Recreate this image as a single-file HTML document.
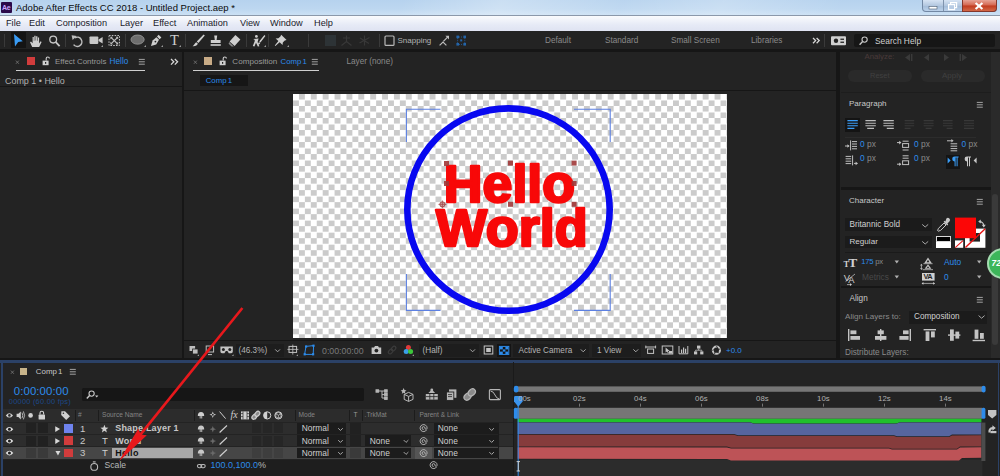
<!DOCTYPE html>
<html>
<head>
<meta charset="utf-8">
<title>Adobe After Effects CC 2018 - Untitled Project.aep *</title>
<style>
html,body{margin:0;padding:0;}
body{width:1000px;height:476px;overflow:hidden;background:#161616;font-family:"Liberation Sans",sans-serif;position:relative;}
#app{position:absolute;left:0;top:0;width:1000px;height:476px;overflow:hidden;background:#161616;}
.a{position:absolute;}
.t{position:absolute;white-space:nowrap;line-height:1;font-size:8.5px;color:#a0a0a0;}
.blue{color:#2d8ceb;}
.pn{position:absolute;background:#232323;}
/* title bar */
#title{left:0;top:0;width:1000px;height:15px;background:linear-gradient(115deg,rgba(255,255,255,0) 0,rgba(255,255,255,0) 40%,rgba(255,255,255,0.28) 50%,rgba(255,255,255,0.05) 62%,rgba(255,255,255,0.22) 72%,rgba(255,255,255,0) 84%),linear-gradient(#b6d2ee,#bdd7f0 60%,#cbe0f4);}
#menu{left:0;top:15px;width:1000px;height:16px;background:linear-gradient(#fafbfd,#e6eaf6 60%,#dfe3f2);border-top:1px solid #8b98aa;box-sizing:border-box;}
#tool{left:0;top:31px;width:1000px;height:18.3px;background:#232323;}
</style>
</head>
<body>
<div id="app">
<!-- TITLE BAR -->
<div id="title" class="a"></div>
<div class="a" style="left:1px;top:2px;width:11px;height:11px;background:#2a0a4a;border-radius:1px;"></div>
<span class="t" style="left:2px;top:4px;font-size:7px;color:#c9a6ff;font-weight:bold;letter-spacing:-0.3px;">Ae</span>
<span class="t" style="left:16px;top:3px;font-size:9.5px;color:#0a0a0a;">Adobe After Effects CC 2018 - Untitled Project.aep *</span>

<!-- window controls -->
<div class="a" style="left:922px;top:0;width:75px;height:12px;border:1px solid #7288a4;border-top:none;border-radius:0 0 4px 4px;box-sizing:border-box;background:linear-gradient(#d6e3f3,#b4c8e0 50%,#a3bbd8 52%,#bcd2ea);"></div>
<div class="a" style="left:943px;top:0;width:1px;height:11px;background:#7f93ad;"></div>
<div class="a" style="left:962px;top:0;width:35px;height:12px;border:1px solid #84382c;border-top:none;border-radius:0 0 4px 0;box-sizing:border-box;background:linear-gradient(#e6a396,#d4664f 48%,#c03a1e 52%,#d26848);"></div>
<svg class="a" style="left:922px;top:0;" width="75" height="12" viewBox="0 0 75 12"><rect x="7" y="6.4" width="8" height="2.6" fill="#fff" stroke="#4a5a70" stroke-width="0.6"/><rect x="28.6" y="2.6" width="6" height="5" fill="none" stroke="#fff" stroke-width="1.2"/><rect x="26.6" y="4.6" width="6" height="5" fill="#b8cce4" stroke="#fff" stroke-width="1.2"/><path d="M53.6 3 L60.4 9 M60.4 3 L53.6 9" stroke="#fff" stroke-width="2.2"/></svg>
<!-- MENU BAR -->
<div id="menu" class="a"></div>
<span class="t" style="left:6px;top:19px;font-size:9.2px;color:#1a1a2a;">File</span>
<span class="t" style="left:29px;top:19px;font-size:9.2px;color:#1a1a2a;">Edit</span>
<span class="t" style="left:56px;top:19px;font-size:9.2px;color:#1a1a2a;">Composition</span>
<span class="t" style="left:120px;top:19px;font-size:9.2px;color:#1a1a2a;">Layer</span>
<span class="t" style="left:153px;top:19px;font-size:9.2px;color:#1a1a2a;">Effect</span>
<span class="t" style="left:187px;top:19px;font-size:9.2px;color:#1a1a2a;">Animation</span>
<span class="t" style="left:240px;top:19px;font-size:9.2px;color:#1a1a2a;">View</span>
<span class="t" style="left:270px;top:19px;font-size:9.2px;color:#1a1a2a;">Window</span>
<span class="t" style="left:314px;top:19px;font-size:9.2px;color:#1a1a2a;">Help</span>
<!-- TOOLBAR -->
<div id="tool" class="a"></div>

<div class="a" style="left:10.5px;top:32px;width:15.5px;height:16px;background:#141414;"></div>
<svg class="a" style="left:0;top:31px;" width="1000" height="19" viewBox="0 31 1000 19">
<g fill="none" stroke="none">
<!-- separators -->
<g stroke="#3a3a3a" stroke-width="1"><path d="M4.5 34V47M65.5 34V47M125.5 34V47M185.5 34V47M246.5 34V47M268.5 34V47M308.5 34V47M379.5 34V47M824.5 34V47"/></g>
<!-- selection arrow -->
<path d="M14 34 L22.8 41.2 L18.2 42 L15 46.4 Z" fill="#3a9cf5"/>
<!-- hand -->
<path d="M32.2 47 L30 42.3 L31 41.5 L32.6 43.2 V37 H33.8 V40.8 H34.3 V35.8 H35.6 V40.6 H36.1 V36.2 H37.4 V40.8 H37.9 V37.6 H39.1 V43.5 L40.6 41.2 L41.6 42 L39.2 47 Z" fill="#cfcfcf"/>
<!-- zoom -->
<circle cx="53.2" cy="39.6" r="3.4" stroke="#c8c8c8" stroke-width="1.3"/><path d="M55.8 42.2 L59.6 46.2" stroke="#c8c8c8" stroke-width="1.8"/>
<!-- rotate -->
<path d="M75 37.8 A4.6 4.6 0 1 1 73.6 44.6" stroke="#bdbdbd" stroke-width="1.5"/><path d="M71.6 35.2 L76.8 36 L72.6 40 Z" fill="#bdbdbd"/>
<!-- camera -->
<rect x="89.5" y="36.5" width="8.8" height="7.4" rx="0.8" fill="#c8c8c8"/><path d="M98.6 39.6 L102.6 37 V43.6 L98.6 41 Z" fill="#c8c8c8"/><path d="M103 47 h-2 l2 -2z" fill="#9a9a9a"/>
<!-- pan behind -->
<g stroke="#bdbdbd" stroke-width="1" stroke-dasharray="1.6 1.2"><rect x="109" y="35.5" width="10.5" height="10"/></g>
<path d="M111.2 37.6 L117.4 43.6 M117.4 37.6 L111.2 43.6" stroke="#bdbdbd" stroke-width="1.3"/>
<path d="M110.4 36.8 h2.6 l-2.6 2.6z M118.2 36.8 h-2.6 l2.6 2.6z M110.4 44.4 h2.6 l-2.6 -2.6z M118.2 44.4 h-2.6 l2.6 -2.6z" fill="#bdbdbd"/>
<!-- ellipse -->
<ellipse cx="137.6" cy="39.6" rx="6.6" ry="4.6" fill="#6e6e6e" stroke="#9a9a9a" stroke-width="0.8"/><path d="M146 47 h-2 l2 -2z" fill="#9a9a9a"/>
<!-- pen -->
<path d="M158.6 34.8 L161.4 37.6 L159.6 39.2 L157 36.6 Z" fill="#cfcfcf"/><path d="M156.4 37.2 L159 39.8 L156.2 44.4 L151 46 L152.6 40.6 Z" fill="#cfcfcf"/><circle cx="155.4" cy="41.6" r="0.9" fill="#232323"/><path d="M163 47 h-2 l2 -2z" fill="#9a9a9a"/>
<!-- T -->
<path d="M181 47 h-2 l2 -2z" fill="#9a9a9a"/>
<!-- brush -->
<path d="M203.6 34.6 L204.8 35.6 L198.4 43 L196.8 41.6 Z" fill="#cfcfcf"/><path d="M196.2 42.2 L197.8 43.6 C197.4 45.6 195.4 46.4 192.6 46.2 C194.4 45.2 194.4 43.2 196.2 42.2Z" fill="#cfcfcf"/>
<!-- stamp -->
<path d="M214.2 35.4 h3 l-0.6 4.6 h4 v3 h-9.8 v-3 h4 Z" fill="#cfcfcf"/><rect x="210.6" y="44.2" width="10.2" height="1.6" fill="#cfcfcf"/>
<!-- eraser -->
<path d="M235.4 35 L240.4 39.6 L234.6 46 L229.6 41.4 Z" fill="#cfcfcf"/><path d="M229.2 42 L233.8 46.4 L231.6 46.6 L228.6 43.8 Z" fill="#8a8a8a"/>
<!-- roto / puppet -->
<circle cx="256.4" cy="36.4" r="1.4" fill="#cfcfcf"/><path d="M253.2 39 L258.6 38.4 L257.6 42 L259.4 46.2 L257.8 46.4 L256 42.8 L254.4 46.4 L252.8 46 L254.8 41 L254.6 39.8 Z" fill="#cfcfcf"/>
<path d="M264.4 35 L265.4 36 L260.4 42.4 L259.2 41.4 Z M259 42 L260.2 43 C259.8 44.4 258.6 44.8 257.4 44.6 C258.4 44 258.2 42.8 259 42Z" fill="#cfcfcf"/><path d="M266 47 h-2 l2 -2z" fill="#9a9a9a"/>
<!-- pin -->
<path d="M281.2 34.8 L286.6 40 L284.8 40.6 L282.8 42.4 L282.6 45 L279.6 42.2 L275.4 46 L274.8 45.4 L278.4 41 L275.6 38.4 L278.4 38.2 L280.4 36.4 Z" fill="#cfcfcf"/><path d="M289 47 h-2 l2 -2z" fill="#9a9a9a"/>
<!-- dim icons -->
<g fill="#2d3336"><rect x="325" y="35" width="11" height="11"/></g>
<g stroke="#383838" stroke-width="1.2"><path d="M346.5 35.5 V42 M341.5 45.5 L346.5 41.5 L351.5 45.5 M343 38 h7"/><path d="M364.5 35.5 V45.5 M359.5 43 L369.5 37.5 M360 38 L369 43.5"/></g>
<!-- snapping checkbox -->
<rect x="385" y="36" width="9" height="9.4" rx="1" stroke="#b8b8b8" stroke-width="1.2"/>
<!-- snap icon 1 -->
<path d="M439.6 45.4 L443 42 L446.4 45.4" stroke="#bdbdbd" stroke-width="1.2"/><path d="M443.4 41.4 L447.6 37.2" stroke="#bdbdbd" stroke-width="1.2"/><path d="M449 35.8 v3.6 l-3.6 -3.6z" fill="#bdbdbd"/>
<!-- snap icon 2 blue -->
<g fill="#2464a8"><rect x="456.4" y="35.6" width="2.6" height="2.6"/><rect x="463.4" y="35.6" width="2.6" height="2.6"/><rect x="456.4" y="43" width="2.6" height="2.6"/><rect x="463.4" y="43" width="2.6" height="2.6"/><rect x="460.2" y="39.4" width="2" height="2"/></g>
<g stroke="#2464a8" stroke-width="0.8" stroke-dasharray="1 1"><path d="M459 37 h4.4 M459 44.4 h4.4 M457.6 38.2 v4.8 M464.8 38.2 v4.8"/></g>
<!-- >> -->
<path d="M813 38 l2.6 2.6 l-2.6 2.6 M816.6 38 l2.6 2.6 l-2.6 2.6" stroke="#d8d8d8" stroke-width="1.3"/>
<!-- workspace icon -->
<rect x="831" y="36.2" width="15" height="9" rx="1" fill="#d0d0d0"/><circle cx="836" cy="40.7" r="2.2" fill="#232323"/><rect x="840.4" y="38.6" width="3.6" height="1.3" fill="#232323"/><rect x="840.4" y="41.6" width="3.6" height="1.3" fill="#232323"/>
</g>
</svg>
<span class="t" style="left:170px;top:33px;font-size:14.5px;color:#cfcfcf;font-family:'Liberation Serif',serif;">T</span>
<span class="t" style="left:397.5px;top:36.5px;font-size:8px;color:#b4b4b4;">Snapping</span>
<span class="t" style="left:545px;top:36.5px;font-size:8.2px;color:#8a8a8a;">Default</span>
<span class="t" style="left:605px;top:36.5px;font-size:8.2px;color:#8a8a8a;">Standard</span>
<span class="t" style="left:671px;top:36.5px;font-size:8.2px;color:#8a8a8a;">Small Screen</span>
<span class="t" style="left:751px;top:36.5px;font-size:8.2px;color:#8a8a8a;">Libraries</span>
<div class="a" style="left:854px;top:34px;width:141px;height:13px;background:#161616;border-radius:2px;"></div>
<svg class="a" style="left:858px;top:35px;" width="12" height="12" viewBox="0 0 12 12"><circle cx="6.6" cy="4.6" r="2.6" fill="none" stroke="#c8c8c8" stroke-width="1.1"/><path d="M4.6 6.6 L1.6 9.8" stroke="#c8c8c8" stroke-width="1.4"/></svg>
<span class="t" style="left:875px;top:36.5px;font-size:8.4px;color:#d0d0d0;">Search Help</span>

<!-- PANELS -->
<div class="pn" id="pleft" style="left:0;top:52px;width:182px;height:306px;"></div>
<div class="pn" id="pcomp" style="left:184px;top:52px;width:652px;height:306px;"></div>
<div class="pn" id="pright" style="left:839.5px;top:52px;width:160.5px;height:306px;"></div>
<div class="pn" id="ptime" style="left:0;top:361px;width:1000px;height:115px;"></div>

<!-- left panel: Effect Controls -->
<svg class="a" style="left:15.0px;top:58.0px;" width="6" height="8" viewBox="0 0 6 8"><path d="M0.9 2.6 L3.9 5.8 M3.9 2.6 L0.9 5.8" stroke="#7a7a7a" stroke-width="0.8" fill="none"/></svg>
<div class="a" style="left:27px;top:57px;width:8px;height:8px;background:#d13c3c;"></div>
<svg class="a" style="left:42px;top:56px;" width="8" height="10" viewBox="0 0 8 10"><rect x="0.6" y="4.6" width="6" height="4.6" fill="#d0d0d0"/><path d="M4.2 4.6 V2.6 A1.6 1.6 0 0 1 7.4 2.6" fill="none" stroke="#d0d0d0" stroke-width="1.1"/><rect x="3" y="6" width="1.2" height="1.8" fill="#232323"/></svg>
<span class="t" style="left:55px;top:58px;font-size:7.85px;color:#9a9a9a;">Effect Controls</span>
<span class="t blue" style="left:109.6px;top:58px;font-size:8.2px;">Hello</span>
<svg class="a" style="left:138px;top:58px;" width="8" height="8" viewBox="0 0 8 8"><path d="M0.8 1.4 h6 M0.8 3.8 h6 M0.8 6.2 h6" stroke="#b0b0b0" stroke-width="0.9"/></svg>
<svg class="a" style="left:170px;top:58px;" width="9" height="8" viewBox="0 0 9 8"><path d="M1 1 l2.8 2.8 l-2.8 2.8 M4.8 1 l2.8 2.8 l-2.8 2.8" fill="none" stroke="#d8d8d8" stroke-width="1.3"/></svg>
<div class="a" style="left:16px;top:69.6px;width:129px;height:1.4px;background:#cfcfcf;"></div>
<span class="t" style="left:5px;top:76.6px;font-size:8.95px;color:#b0b0b0;">Comp 1 • Hello</span>
<div class="a" style="left:0;top:86px;width:183px;height:1px;background:#161616;"></div>


<!-- comp panel -->
<svg class="a" style="left:193.0px;top:58.0px;" width="6" height="8" viewBox="0 0 6 8"><path d="M0.9 2.6 L3.9 5.8 M3.9 2.6 L0.9 5.8" stroke="#7a7a7a" stroke-width="0.8" fill="none"/></svg>
<div class="a" style="left:204px;top:57px;width:8px;height:8px;background:#c8ab86;"></div>
<svg class="a" style="left:219px;top:56px;" width="8" height="10" viewBox="0 0 8 10"><rect x="0.6" y="4.6" width="6" height="4.6" fill="#d0d0d0"/><path d="M4.2 4.6 V2.6 A1.6 1.6 0 0 1 7.4 2.6" fill="none" stroke="#d0d0d0" stroke-width="1.1"/><rect x="3" y="6" width="1.2" height="1.8" fill="#232323"/></svg>
<span class="t" style="left:232.3px;top:58px;font-size:8.1px;color:#9a9a9a;">Composition</span>
<span class="t blue" style="left:280.6px;top:58px;font-size:7.8px;word-spacing:-1px;">Comp 1</span>
<svg class="a" style="left:311px;top:58px;" width="8" height="8" viewBox="0 0 8 8"><path d="M0.8 1.4 h6 M0.8 3.8 h6 M0.8 6.2 h6" stroke="#b0b0b0" stroke-width="0.9"/></svg>
<div class="a" style="left:193px;top:69.6px;width:126px;height:1.4px;background:#cfcfcf;"></div>
<span class="t" style="left:346.5px;top:58px;font-size:8.2px;color:#8a8a8a;">Layer (none)</span>
<div class="a" style="left:199.7px;top:75px;width:48.3px;height:10.8px;background:#161616;"></div>
<span class="t blue" style="left:205.7px;top:76.6px;font-size:7.8px;word-spacing:-1px;">Comp 1</span>
<div class="a" style="left:184px;top:90px;width:652px;height:1px;background:#161616;"></div>
<!-- checkerboard -->
<div class="a" style="left:293.2px;top:93.6px;width:433.8px;height:244.3px;background:conic-gradient(#cbcbcb 25%,#fff 0 50%,#cbcbcb 0 75%,#fff 0);background-size:11.89px 12.02px;"></div>
<svg class="a" style="left:293px;top:94px;" width="434" height="245" viewBox="293 94 434 245">
<circle cx="508.5" cy="209.6" r="101.2" fill="none" stroke="#0808f0" stroke-width="6.6"/>
<g font-family="Liberation Sans, sans-serif" font-weight="bold" fill="#f80808" stroke="#f80808" stroke-width="2.5" stroke-linejoin="round">
<text x="443.8" y="201.8" font-size="51" textLength="131.2" lengthAdjust="spacingAndGlyphs">Hello</text>
<text x="435.9" y="246" font-size="51" textLength="151.8" lengthAdjust="spacingAndGlyphs">World</text>
</g>
<g fill="none" stroke="#5c80e2" stroke-width="1.1"><path d="M406.4 142 V109.2 H440.5 M574 109.200 H610.2 V142 M406.4 274 V310.400 H440.5 M574 310.400 H610.2 V274"/></g>
<g fill="#a03838" opacity="0.9"><rect x="444" y="161" width="5" height="5"/><rect x="508" y="160.6" width="5" height="5"/><rect x="571.600" y="160.6" width="5" height="5"/><rect x="444" y="181" width="5" height="5"/><rect x="571.600" y="181" width="5" height="5"/><rect x="508" y="201.800" width="5" height="5"/><rect x="571.600" y="201.800" width="5" height="5"/></g>
<circle cx="442.400" cy="204.400" r="2.600" fill="#c8a0a0" stroke="#a04848" stroke-width="0.9"/><path d="M438.400 204.400 h8 M442.400 200.400 v8" stroke="#a04848" stroke-width="0.7"/>
</svg>

<!-- comp footer -->
<div class="a" style="left:184px;top:340.4px;width:652px;height:1px;background:#161616;"></div>
<div class="a" style="left:236px;top:344px;width:48px;height:13px;background:#1d1d1d;"></div>
<div class="a" style="left:419px;top:344px;width:60px;height:13px;background:#1d1d1d;"></div>
<div class="a" style="left:513px;top:344px;width:76px;height:13px;background:#1d1d1d;"></div>
<div class="a" style="left:592px;top:344px;width:49px;height:13px;background:#1d1d1d;"></div>
<div class="a" style="left:497px;top:344px;width:14px;height:13px;background:#141414;"></div>
<svg class="a" style="left:184px;top:342px;" width="654" height="17" viewBox="184 342 654 17">
<g fill="none">
<!-- icon1 -->
<rect x="189.5" y="346" width="5.6" height="5" fill="#bdbdbd"/><rect x="192.6" y="349" width="5.4" height="5" fill="#bdbdbd" stroke="#232323" stroke-width="0.8"/><path d="M199 356 h-1.8 l1.8 -1.8z" fill="#9a9a9a"/>
<!-- icon2 monitor -->
<rect x="206.2" y="346" width="7.4" height="6" stroke="#bdbdbd" stroke-width="1"/><path d="M208 354.6 h4" stroke="#bdbdbd" stroke-width="1"/>
<!-- icon3 goggles -->
<path d="M220.4 346.6 h12.4 v5 q0 1.6 -1.6 1.6 h-2.4 l-1.4 -2.2 h-1.6 l-1.4 2.2 h-2.4 q-1.6 0 -1.6 -1.6z" fill="#c4c4c4"/><circle cx="223.4" cy="349.6" r="1.5" fill="#232323"/><circle cx="229.8" cy="349.6" r="1.5" fill="#232323"/><path d="M233.6 356 h-1.8 l1.8 -1.8z" fill="#9a9a9a"/>
<!-- chevrons -->
<g stroke="#a8a8a8" stroke-width="1"><path d="M275.2 349.4 l2.4 2.4 l2.4 -2.4 M470.2 349.4 l2.4 2.4 l2.4 -2.4 M580.8 349.4 l2.4 2.4 l2.4 -2.4 M633.4 349.4 l2.4 2.4 l2.4 -2.4"/></g>
<!-- grid target -->
<rect x="289" y="346.4" width="7.6" height="6" stroke="#c4c4c4" stroke-width="1"/><path d="M292.8 344.6 v10 M287.4 349.4 h11" stroke="#c4c4c4" stroke-width="0.8"/><path d="M298 356 h-1.8 l1.8 -1.8z" fill="#9a9a9a"/>
<!-- mask shape blue -->
<path d="M304.6 354.4 L306 346.4 L313.6 345.6 L313.2 354.4 Z" stroke="#2d8ceb" stroke-width="1"/><g fill="#2d8ceb"><rect x="303.6" y="353.2" width="2.2" height="2.2"/><rect x="305" y="345.4" width="2.2" height="2.2"/><rect x="312.4" y="344.6" width="2.2" height="2.2"/><rect x="312" y="353.2" width="2.2" height="2.2"/></g>
<!-- camera snapshot -->
<path d="M371.6 347.4 h2.4 l1 -1.4 h3 l1 1.4 h2.2 v6.6 h-9.6z" fill="#c4c4c4"/><circle cx="376.4" cy="350.6" r="1.9" fill="#232323"/>
<!-- dim icon -->
<g stroke="#3c3c3c" stroke-width="1.2"><ellipse cx="390.6" cy="351.6" rx="2.6" ry="1.8" transform="rotate(-45 390.6 351.6)"/><ellipse cx="393.6" cy="348.6" rx="2.6" ry="1.8" transform="rotate(-45 393.6 348.6)"/></g>
<!-- rgb -->
<circle cx="408.4" cy="347.6" r="2.5" fill="#e03a3a"/><circle cx="406.2" cy="351.4" r="2.5" fill="#3aa0e8"/><circle cx="410.6" cy="351.4" r="2.5" fill="#3cc83c"/><path d="M414 356 h-1.8 l1.8 -1.8z" fill="#9a9a9a"/>
<!-- region of interest -->
<rect x="484.2" y="346" width="8.6" height="8" stroke="#c4c4c4" stroke-width="1"/><rect x="486.2" y="348" width="4.6" height="4" fill="#c4c4c4"/>
<!-- transparency grid blue -->
<rect x="499.4" y="346.4" width="9.4" height="8" stroke="#2d8ceb" stroke-width="1"/><g fill="#2d8ceb"><rect x="500" y="347" width="2.8" height="2.4"/><rect x="505.4" y="347" width="2.8" height="2.4"/><rect x="502.8" y="349.4" width="2.6" height="2.2"/><rect x="500" y="351.6" width="2.8" height="2.4"/><rect x="505.4" y="351.6" width="2.8" height="2.4"/></g>
<!-- right icons -->
<g stroke="#c4c4c4" stroke-width="1"><rect x="647.6" y="349" width="6" height="4.4"/><path d="M645.8 347 h9.8 M645.8 345.6 v2.8 M655.6 345.6 v2.8"/></g>
<rect x="662.2" y="346" width="10.6" height="8" stroke="#c4c4c4" stroke-width="1"/><path d="M665.6 347.6 v5 l1.4 -1.2 l1 2 l0.9 -0.4 l-1 -2 h1.8z" fill="#c4c4c4"/><rect x="669" y="351" width="3.4" height="2.6" fill="#c4c4c4"/>
<g stroke="#c4c4c4" stroke-width="1"><path d="M679 346 v7.8 h8.8 v-7.8"/><path d="M681.6 353 v-3.4 M683.6 353 v-5.6 M685.6 353 v-4.2" stroke-width="1.2"/></g>
<g fill="#c4c4c4"><rect x="697" y="345.6" width="3.4" height="3"/><rect x="694" y="351.4" width="3.2" height="3"/><rect x="700.2" y="351.4" width="3.2" height="3"/></g><path d="M698.7 348.6 v1.6 M695.6 351.4 v-1.2 h6.2 v1.2" stroke="#c4c4c4" stroke-width="0.8"/>
<circle cx="716.4" cy="350.2" r="3.6" stroke="#c4c4c4" stroke-width="2"/><path d="M716.4 346 l1.6 2.4 M720.4 349 l-2.8 0.6 M719.4 353.4 l-2.4 -1.6 M714.6 354 l0.4 -2.8 M712.2 350.4 l2.6 -1" stroke="#232323" stroke-width="0.8"/>
</g>
</svg>
<span class="t" style="left:238.5px;top:347px;font-size:8.2px;color:#b4b4b4;">(46.3%)</span>
<span class="t" style="left:322px;top:346.8px;font-size:8.8px;color:#7a7a7a;">0:00:00:00</span>
<span class="t" style="left:422.5px;top:347px;font-size:8.2px;color:#b4b4b4;">(Half)</span>
<span class="t" style="left:518.5px;top:347px;font-size:8.2px;color:#b4b4b4;">Active Camera</span>
<span class="t" style="left:597px;top:347px;font-size:8.2px;color:#b4b4b4;">1 View</span>
<span class="t blue" style="left:726px;top:347px;font-size:8px;">+0.0</span>



<!-- right panel -->
<div class="a" style="left:991.4px;top:52px;width:8.6px;height:306px;background:#2a2a2a;"></div>
<div class="a" style="left:991.6px;top:194px;width:6.4px;height:151px;background:#3a3a3a;border-radius:3.2px;"></div>
<span class="t" style="left:864.5px;top:53.2px;font-size:7.8px;color:#4a3a3a;">Analyze:</span>
<svg class="a" style="left:900px;top:53.2px;" width="80" height="9" viewBox="0 0 80 9"><g fill="#3a3a3a"><path d="M10 1 v7 l-5 -3.5z M11 1 h1.4 v7 h-1.4z M29 1 v7 l-5 -3.5z M44 1 v7 l5 -3.5z M62 1 v7 l5 -3.5z M59.6 1 h1.4 v7 h-1.4z"/></g></svg>
<div class="a" style="left:848px;top:69.5px;width:64px;height:12.5px;border-radius:7px;background:#2a2a2a;"></div>
<div class="a" style="left:920.5px;top:69.5px;width:64px;height:12.5px;border-radius:7px;background:#2a2a2a;"></div>
<span class="t" style="left:870px;top:72px;font-size:7.5px;color:#404040;">Reset</span>
<span class="t" style="left:942px;top:72px;font-size:8px;color:#404040;">Apply</span>
<div class="a" style="left:841px;top:92.4px;width:150px;height:1px;background:#1d1d1d;"></div>
<span class="t" style="left:849px;top:100.2px;font-size:8.05px;color:#c8c8c8;">Paragraph</span>
<svg class="a" style="left:975.5px;top:100.6px;" width="8" height="8" viewBox="0 0 8 8"><path d="M0.8 1.4 h6 M0.8 3.8 h6 M0.8 6.2 h6" stroke="#b0b0b0" stroke-width="0.9"/></svg>
<div class="a" style="left:845px;top:118px;width:15px;height:14px;background:#141414;"></div>
<svg class="a" style="left:841px;top:115px;" width="150" height="56" viewBox="841 115 150 56">
<g fill="none">
<path d="M847.4 120.6 h10.4 M847.4 123.2 h10.4 M847.4 125.8 h10.4 M847.4 128.4 h7" stroke="#3a9cf5" stroke-width="1.1"/>
<path d="M865.4 120.6 h10.4 M865.4 123.2 h10.4 M865.4 125.8 h10.4 M867.2 128.4 h6.8" stroke="#bdbdbd" stroke-width="1.1"/>
<path d="M883.4 120.6 h10.4 M883.4 123.2 h10.4 M883.4 125.8 h10.4 M886.8 128.4 h7" stroke="#bdbdbd" stroke-width="1.1"/>
<g stroke="#383838" stroke-width="1.1"><path d="M904.6 120.6 h9.6 M904.6 123.2 h9.6 M904.6 125.8 h9.6 M904.6 128.4 h6"/><path d="M923.6 120.6 h10 M923.6 123.2 h10 M923.6 125.8 h10 M925.6 128.4 h6"/><path d="M943 120.6 h9.6 M943 123.2 h9.6 M943 125.8 h9.6 M946.6 128.4 h6"/><path d="M964 120.6 h10 M964 123.2 h10 M964 125.8 h10 M964 128.4 h10"/></g>
<g transform="translate(0,1.4)"><!-- indent icons row 1 -->
<g stroke="#c0c0c0" stroke-width="1"><path d="M852 140.2 h5 M852 142.6 h5 M852 145 h5 M852 147.4 h5 M850.6 139 v10"/><path d="M845 144.6 h4"/></g><path d="M849.6 144.6 l-2.2 -1.8 v3.6z" fill="#c0c0c0"/>
<g stroke="#c0c0c0" stroke-width="1"><path d="M902.6 139.8 h6 M902.6 148.6 h6"/><rect x="902.6" y="142.2" width="6" height="3.8"/><path d="M897 141.2 h3.4"/></g><path d="M901.4 141.2 l-2.2 -1.8 v3.6z" fill="#c0c0c0"/>
<g stroke="#c0c0c0" stroke-width="1"><path d="M950.6 142.4 h6.6 M950.6 144.8 h6.6 M950.6 147.2 h6.6 M950.6 149.4 h6.6"/><path d="M947 139.4 h5"/></g><path d="M953.6 139.4 l-2.2 -1.8 v3.6z" fill="#c0c0c0"/>
</g>
<g transform="translate(0,2.4)"><!-- row 2 -->
<g stroke="#c0c0c0" stroke-width="1"><path d="M845.6 154 h5.6 M845.6 156.4 h5.6 M845.6 158.8 h5.6 M845.6 161.2 h5.6 M852.6 153 v10"/><path d="M854 161 h3.4"/></g><path d="M857.8 161 l-2.2 -1.8 v3.6z" fill="#c0c0c0"/>
<g stroke="#c0c0c0" stroke-width="1"><path d="M902.6 153.4 h6 M902.6 155.8 h6"/><rect x="902.6" y="158.4" width="6" height="3.8"/><path d="M897 161.8 h3.4"/></g><path d="M901.4 161.8 l-2.2 -1.8 v3.6z" fill="#c0c0c0"/>
</g>
</g>
</svg>
<div class="a" style="left:945.5px;top:155px;width:14.5px;height:14px;background:#141414;"></div>
<svg class="a" style="left:945px;top:154.4px;" width="34" height="15" viewBox="945 151 34 15"><path d="M947.6 154.4 l3 3 l-3 3z" fill="#3a9cf5"/><path d="M954.2 153.6 h4.4 v1 h-1 v8.6 h-1 v-8.6 h-1 v8.6 h-1 v-4.8 a2.4 2.4 0 0 1 0 -4.8z" fill="#3a9cf5"/><path d="M966.6 153.6 h4.4 v1 h-1 v8.6 h-1 v-8.6 h-1 v8.6 h-1 v-4.8 a2.4 2.4 0 0 1 0 -4.8z" fill="#c8c8c8"/><path d="M976.6 154.4 l-3 3 l3 3z" fill="#c8c8c8"/></svg>
<span class="t blue" style="left:860px;top:140px;font-size:8.4px;">0 <span style="color:#8a8a8a;">px</span></span>
<span class="t blue" style="left:914px;top:140px;font-size:8.4px;">0 <span style="color:#8a8a8a;">px</span></span>
<span class="t blue" style="left:961.5px;top:140px;font-size:8.4px;">0 <span style="color:#8a8a8a;">px</span></span>
<span class="t blue" style="left:860px;top:153.5px;font-size:8.4px;">0 <span style="color:#8a8a8a;">px</span></span>
<span class="t blue" style="left:914px;top:153.5px;font-size:8.4px;">0 <span style="color:#8a8a8a;">px</span></span>
<div class="a" style="left:845px;top:136.6px;width:131px;height:1px;background:#2c2c2c;"></div>
<div class="a" style="left:841px;top:187.3px;width:150.4px;height:2.5px;background:#161616;"></div>
<span class="t" style="left:849px;top:196.8px;font-size:8px;color:#c8c8c8;">Character</span>
<svg class="a" style="left:976px;top:197.5px;" width="8" height="8" viewBox="0 0 8 8"><path d="M0.8 1.4 h6 M0.8 3.8 h6 M0.8 6.2 h6" stroke="#b0b0b0" stroke-width="0.9"/></svg>
<div class="a" style="left:844.5px;top:218.4px;width:87.5px;height:12.8px;background:#1b1b1b;"></div>
<div class="a" style="left:844.5px;top:235.8px;width:87.5px;height:12.6px;background:#1b1b1b;"></div>
<span class="t" style="left:849.5px;top:220.8px;font-size:8.2px;color:#d0d0d0;">Britannic Bold</span>
<span class="t" style="left:849.5px;top:238.2px;font-size:8.1px;color:#d0d0d0;">Regular</span>
<svg class="a" style="left:920px;top:218.8px;" width="12" height="30" viewBox="0 0 12 30"><path d="M2.2 5.4 l3 2.6 l3 -2.6 M2.2 22.4 l3 2.6 l3 -2.6" fill="none" stroke="#a8a8a8" stroke-width="1"/></svg>
<!-- eyedropper -->
<svg class="a" style="left:936px;top:217px;" width="16" height="16" viewBox="0 0 16 16"><path d="M10.4 1.6 a2 2 0 0 1 3 3 l-2 2 l0.8 0.8 l-1 1 l-3.6 -3.6 l1 -1 l0.8 0.8z" fill="#c8c8c8"/><path d="M8 6 l2 2 l-5.4 5.4 l-2.4 0.8 l-0.6 -0.6 l0.8 -2.2z" fill="none" stroke="#c8c8c8" stroke-width="1"/></svg>
<!-- swatches -->
<div class="a" style="left:936px;top:236px;width:15px;height:6px;background:#000;border:0.6px solid #d8d8d8;box-sizing:border-box;"></div>
<div class="a" style="left:936px;top:242px;width:15px;height:6px;background:#fff;"></div>
<svg class="a" style="left:954px;top:215px;" width="36" height="35" viewBox="954 215 36 35">
<rect x="965" y="228.6" width="20.4" height="19.2" fill="#fff"/><rect x="969.6" y="233" width="10.4" height="8.6" fill="#232323"/><path d="M965.4 247.6 L985.2 228.8" stroke="#e81010" stroke-width="1.4"/>
<rect x="955" y="217.6" width="21" height="20.6" fill="#fc0606"/>
<rect x="955" y="240.4" width="8.2" height="7.4" fill="#fff"/><path d="M955.2 247.6 L963 240.6" stroke="#e81010" stroke-width="1.1"/>
<path d="M979.4 221.6 a4.200 4.200 0 0 1 4.400 4" fill="none" stroke="#c8c8c8" stroke-width="1.1"/><path d="M978.2 221.6 l2.600 -2 v4z M983.8 227.400 l-2 -2.600 h4z" fill="#c8c8c8"/>
</svg>
<div class="a" style="left:845px;top:252px;width:146px;height:1px;background:#1a1a1a;"></div>
<!-- size rows -->
<span class="t" style="left:843.4px;top:255.6px;font-size:13.5px;color:#d0d0d0;font-family:'Liberation Serif',serif;font-weight:bold;letter-spacing:-0.8px;"><span style="font-size:8.6px;">T</span>T</span>
<span class="t blue" style="left:861.2px;top:257.8px;font-size:7.7px;letter-spacing:-0.25px;">175 <span style="color:#8a8a8a;">px</span></span>
<span class="t blue" style="left:944px;top:258px;font-size:8.4px;">Auto</span>
<span class="t" style="left:843.8px;top:273.2px;font-size:9.4px;color:#d0d0d0;letter-spacing:-1.2px;">V<span style="position:relative;top:1.6px;">A</span></span>
<span class="t" style="left:862px;top:273px;font-size:8.4px;color:#484848;">Metrics</span>
<span class="t blue" style="left:944px;top:273px;font-size:8.4px;">0</span>
<svg class="a" style="left:841px;top:254px;" width="150" height="33" viewBox="841 254 150 33">
<g fill="#b0b0b0"><path d="M894.6 260.4 h4.4 l-2.2 3z M894.6 275.4 h4.4 l-2.2 3z M977 260.4 h4.4 l-2.2 3z M977 275.4 h4.4 l-2.2 3z"/></g>
<path d="M845.6 281.6 l9.4 -7.6" stroke="#d0d0d0" stroke-width="0.7"/><path d="M847 284.6 h3.6" stroke="#d0d0d0" stroke-width="0.7"/><path d="M852 284.6 l-2 -1.400 v2.800z" fill="#d0d0d0"/>
<!-- leading icon -->
<path d="M928 257.4 l3.800 5.800 h-7.600z" fill="#c4c4c4"/><path d="M928 259.800 l1.400 2.400 h-2.800z" fill="#232323"/>
<path d="M928 264.200 l3.400 4.600 h-6.800z" fill="#c4c4c4"/><path d="M928 266.200 l1.200 1.800 h-2.400z" fill="#232323"/>
<path d="M923.400 263.700 h9.200 M922.600 269.700 h10.400" stroke="#c4c4c4" stroke-width="0.800"/>
<path d="M921.400 265.200 v3.600" stroke="#c4c4c4" stroke-width="0.800"/><path d="M921.400 263.800 l1.400 1.800 h-2.800z M921.400 270 l1.400 -1.800 h-2.800z" fill="#c4c4c4"/>
<!-- tracking icon -->
<rect x="922" y="273" width="12.6" height="7.6" fill="#d0d0d0"/><path d="M922 283.4 h12.6" stroke="#d0d0d0" stroke-width="0.7"/><path d="M921.6 283.4 l1.800 -1.400 v2.800z M935 283.4 l-1.800 -1.400 v2.800z" fill="#d0d0d0"/>
</svg>
<span class="t" style="left:923.4px;top:273.4px;font-size:7.4px;color:#232323;font-weight:bold;letter-spacing:-0.6px;">VA</span>
<!-- green circle -->
<div class="a" style="left:987px;top:247.5px;width:31px;height:31px;border-radius:50%;background:#3db65a;border:2px solid #a4dcb0;box-sizing:border-box;"></div>
<span class="t" style="left:991.5px;top:259px;font-size:8.4px;color:#fff;font-weight:bold;font-style:italic;">72</span>
<div class="a" style="left:841px;top:285.8px;width:150.4px;height:2.2px;background:#161616;"></div>
<span class="t" style="left:849.5px;top:295px;font-size:8.2px;color:#c8c8c8;">Align</span>
<svg class="a" style="left:976px;top:295.6px;" width="8" height="8" viewBox="0 0 8 8"><path d="M0.8 1.4 h6 M0.8 3.8 h6 M0.8 6.2 h6" stroke="#b0b0b0" stroke-width="0.9"/></svg>
<span class="t" style="left:845px;top:312.5px;font-size:8.1px;color:#8a8a8a;">Align Layers to:</span>
<div class="a" style="left:908.5px;top:310.5px;width:78.5px;height:13px;background:#1b1b1b;"></div>
<span class="t" style="left:914px;top:312.5px;font-size:8.2px;color:#d0d0d0;">Composition</span>
<svg class="a" style="left:976px;top:311px;" width="12" height="12" viewBox="0 0 12 12"><path d="M2.6 4.6 l3 2.6 l3 -2.6" fill="none" stroke="#a8a8a8" stroke-width="1"/></svg>
<svg class="a" style="left:841px;top:327px;" width="150" height="16" viewBox="841 327 150 16">
<g fill="#c4c4c4">
<rect x="848" y="329" width="1.4" height="12"/><rect x="850.4" y="330.4" width="6" height="3.8"/><rect x="850.4" y="336" width="9.6" height="3.8"/>
<rect x="880" y="329" width="1.4" height="12"/><rect x="877.6" y="330.4" width="6.2" height="3.8"/><rect x="875" y="336" width="11.4" height="3.8"/>
<rect x="909.6" y="329" width="1.4" height="12"/><rect x="903" y="330.4" width="5.6" height="3.8"/><rect x="899.4" y="336" width="9.2" height="3.8"/>
<rect x="923.6" y="329" width="12.4" height="1.4"/><rect x="925.6" y="331.4" width="3.8" height="9.6"/><rect x="931" y="331.4" width="3.8" height="6"/>
<rect x="948" y="334.4" width="12.4" height="1.4"/><rect x="950" y="329.4" width="3.8" height="11.4"/><rect x="955.4" y="331.6" width="3.8" height="7"/>
<rect x="972.6" y="339.8" width="12.4" height="1.4"/><rect x="974.6" y="329.6" width="3.8" height="9.2"/><rect x="980" y="333" width="3.8" height="5.8"/>
</g></svg>
<span class="t" style="left:845px;top:348.5px;font-size:8.2px;color:#8a8a8a;">Distribute Layers:</span>


<!-- timeline -->
<div class="a" style="left:0;top:360.4px;width:1000px;height:2.4px;background:#2b4166;"></div>
<div class="a" style="left:1.2px;top:360.4px;width:1.4px;height:116px;background:#2b4166;"></div>
<svg class="a" style="left:9.5px;top:367.5px;" width="6" height="8" viewBox="0 0 6 8"><path d="M0.9 2.6 L3.9 5.8 M3.9 2.6 L0.9 5.8" stroke="#7a7a7a" stroke-width="0.8" fill="none"/></svg>
<div class="a" style="left:19.6px;top:367.6px;width:7.2px;height:7.2px;background:#c8b48a;"></div>
<span class="t" style="left:35.8px;top:367.6px;font-size:7.9px;color:#c8c8c8;word-spacing:-1px;">Comp 1</span>
<svg class="a" style="left:68.6px;top:368px;" width="8" height="8" viewBox="0 0 8 8"><path d="M0.8 1.4 h6 M0.8 3.8 h6 M0.8 6.2 h6" stroke="#b0b0b0" stroke-width="0.9"/></svg>
<span class="t blue" style="left:13.7px;top:386.2px;font-size:11.4px;letter-spacing:0.12px;">0:00:00:00</span>
<span class="t" style="left:8.8px;top:397.6px;font-size:7.4px;letter-spacing:0.25px;color:#1c4888;">00000 (60.00 fps)</span>
<div class="a" style="left:82px;top:388.4px;width:281.5px;height:12.6px;background:#161616;border-radius:1.5px;"></div>
<svg class="a" style="left:86px;top:389px;" width="14" height="12" viewBox="0 0 14 12"><circle cx="5.6" cy="4.6" r="2.6" fill="none" stroke="#c8c8c8" stroke-width="1.1"/><path d="M3.6 6.6 L0.8 9.6" stroke="#c8c8c8" stroke-width="1.4"/><path d="M9 6.4 h3.4 l-1.7 2z" fill="#c8c8c8"/></svg>
<!-- icons right of search -->
<svg class="a" style="left:370px;top:386px;" width="140" height="18" viewBox="370 386 140 18">
<g fill="none" stroke="#b6b6b6" stroke-width="1">
<path d="M376.4 391 h8 M382 391 v7 h3 M382 394.6 h3"/><rect x="376" y="389.8" width="2.6" height="2.4" fill="#b6b6b6"/><rect x="384.6" y="389.8" width="2.6" height="2.4" fill="#b6b6b6"/><rect x="384.6" y="393.4" width="2.6" height="2.4" fill="#b6b6b6"/><rect x="384.6" y="397" width="2.6" height="2.4" fill="#b6b6b6"/>
<path d="M408.6 392.4 l4.4 2 v5 l-4.4 2 l-4.4 -2 v-5z M404.2 394.4 l4.4 2 l4.4 -2 M408.6 396.4 v5"/><path d="M403.6 388 l0.9 2 l2 0.4 l-1.6 1.4 l0.5 2 l-1.8 -1.1 l-1.8 1.1 l0.5 -2 l-1.6 -1.4 l2 -0.4z" fill="#b6b6b6" stroke="none"/>
</g>
<g fill="#b6b6b6"><path d="M425.8 394 h12 v5.6 h-12z"/><path d="M428.4 393 l3.4 -3.6 l3.4 3.6z"/><circle cx="431.8" cy="390" r="1.4"/></g><path d="M429.8 394 v5.6 M433.8 394 v5.6 M425.8 396.6 h12" stroke="#232323" stroke-width="0.8"/>
<g><rect x="449" y="389.4" width="7.4" height="8.4" fill="#b6b6b6"/><rect x="446.4" y="392" width="7.4" height="8.4" fill="#b6b6b6" stroke="#232323" stroke-width="0.9"/><path d="M448 394.6 h4 M448 396.6 h4" stroke="#232323" stroke-width="0.8"/></g>
<g stroke="#b6b6b6" stroke-width="1.2" fill="#8a8a8a"><ellipse cx="467.6" cy="396.6" rx="4" ry="3" transform="rotate(-45 467.6 396.6)"/><ellipse cx="471.8" cy="392.4" rx="4" ry="3" transform="rotate(-45 471.8 392.4)"/></g>
<rect x="489.4" y="389.6" width="11" height="10" rx="1" fill="none" stroke="#b6b6b6" stroke-width="1.1"/><path d="M490.6 391 q3 0.4 4.4 4 t4.4 4" fill="none" stroke="#b6b6b6" stroke-width="1"/>
</svg>
<!-- header row -->
<div class="a" style="left:3px;top:409px;width:510px;height:12.8px;background:#2c2c2c;"></div>
<svg class="a" style="left:0;top:409px;" width="514" height="13" viewBox="0 409 514 13">
<g fill="#d0d0d0">
<path d="M5.8 415.4 q3.6 -4.4 7.2 0 q-3.6 4.4 -7.2 0z"/>
<path d="M16.6 413.8 h1.8 l2.4 -2.4 v8 l-2.4 -2.4 h-1.8z"/>
<circle cx="30.6" cy="415.4" r="2.3"/>
<rect x="38.6" y="414.6" width="6.4" height="5" rx="0.6"/>
<path d="M61.4 411.2 h3.6 l5 5 l-3.8 3.8 l-5 -5z"/>
</g>
<circle cx="9.4" cy="415.4" r="1.3" fill="#2c2c2c"/>
<path d="M22 412.6 q1.6 2.8 0 5.6 M23.4 411.4 q2.4 4 0 8" fill="none" stroke="#d0d0d0" stroke-width="0.8"/>
<path d="M40 414.6 v-1.6 a1.8 1.8 0 0 1 3.6 0 v1.6" fill="none" stroke="#d0d0d0" stroke-width="1.1"/>
<circle cx="63.4" cy="413.2" r="0.8" fill="#2c2c2c"/>
<g stroke="#1c1c1c" stroke-width="1"><path d="M75.5 410 v11 M98.5 410 v11 M194.5 410 v11 M295.5 410 v11 M349.5 410 v11 M362.5 410 v11 M414.5 410 v11"/></g>
<!-- switches header icons -->
<g fill="#d0d0d0">
<path d="M197.8 416 q0 -4 3.2 -4 q3.2 0 3.2 4 h-2 v2.6 h-0.9 v-2.6 h-0.7 v2.6 h-0.9 v-2.6z"/>
<path d="M212.8 411.4 l0.9 2.4 l2.4 0.9 l-2.4 0.9 l-0.9 2.4 l-0.9 -2.4 l-2.4 -0.9 l2.4 -0.9z"/>
<circle cx="212.8" cy="414.7" r="1" fill="#2c2c2c"/>
</g>
<path d="M219.6 411.6 l6 7" stroke="#d0d0d0" stroke-width="1"/>
<rect x="241" y="411.4" width="8" height="8" fill="#d0d0d0"/><path d="M243 411.4 v8 M247 411.4 v8 M241 413.6 h2 M241 416.6 h2 M247 413.6 h2 M247 416.6 h2" stroke="#2c2c2c" stroke-width="0.7"/>
<g stroke="#d0d0d0" stroke-width="1.2" fill="#8a8a8a"><ellipse cx="254.4" cy="416.8" rx="2.8" ry="2" transform="rotate(-45 254.4 416.8)"/><ellipse cx="257.4" cy="413.8" rx="2.8" ry="2" transform="rotate(-45 257.4 413.8)"/></g>
<circle cx="267.2" cy="415.4" r="3.6" fill="none" stroke="#d0d0d0" stroke-width="1"/><path d="M267.2 411.8 a3.6 3.6 0 0 0 0 7.2z" fill="#d0d0d0"/>
<circle cx="278.4" cy="415.4" r="3.6" fill="none" stroke="#d0d0d0" stroke-width="1"/><path d="M278.4 412.4 l2.6 1.4 v3 l-2.6 1.4 l-2.6 -1.4 v-3z M275.8 413.8 l2.6 1.4 l2.6 -1.4 M278.4 415.2 v3" fill="none" stroke="#d0d0d0" stroke-width="0.7"/>
</svg>
<span class="t" style="left:230.6px;top:409.8px;font-size:10px;color:#d0d0d0;font-style:italic;font-family:'Liberation Serif',serif;">fx</span>
<span class="t" style="left:78px;top:412px;font-size:6.6px;color:#858585;">#</span>
<span class="t" style="left:102px;top:412px;font-size:6.6px;color:#858585;">Source Name</span>
<span class="t" style="left:298.5px;top:412px;font-size:6.6px;color:#858585;">Mode</span>
<span class="t" style="left:353.6px;top:412px;font-size:6.6px;color:#9a9a9a;">T</span>
<span class="t" style="left:364.6px;top:412px;font-size:6.6px;color:#858585;">.TrkMat</span>
<span class="t" style="left:419.4px;top:412px;font-size:6.6px;color:#858585;">Parent &amp; Link</span>
<div class="a" style="left:3px;top:422.6px;width:510px;height:11.4px;background:#2d2d2d;"></div>
<div class="a" style="left:25.6px;top:423.2px;width:10.4px;height:10.2px;background:#212121;"></div>
<div class="a" style="left:37.6px;top:423.2px;width:10.4px;height:10.2px;background:#212121;"></div>
<div class="a" style="left:252px;top:423.2px;width:9.4px;height:10.2px;background:#262626;"></div>
<div class="a" style="left:263px;top:423.2px;width:9.4px;height:10.2px;background:#262626;"></div>
<div class="a" style="left:274px;top:423.2px;width:9.4px;height:10.2px;background:#262626;"></div>
<div class="a" style="left:296.6px;top:423.0px;width:49.4px;height:10.6px;background:#1c1c1c;"></div>
<div class="a" style="left:350.4px;top:423.0px;width:10.6px;height:10.6px;background:#212121;"></div>
<div class="a" style="left:433.6px;top:423.0px;width:64.6px;height:10.6px;background:#1c1c1c;"></div>
<span class="t" style="left:301.8px;top:424.4px;font-size:8.4px;color:#d0d0d0;">Normal</span>
<span class="t" style="left:437.8px;top:424.4px;font-size:8.4px;color:#d0d0d0;">None</span>
<svg class="a" style="left:418.8px;top:423.4px;" width="10" height="10" viewBox="0 0 10 10"><path d="M7.6 6.9 A3.5 3.5 0 1 1 8.1 4.9 C8.1 6.8 6 6.9 6 5.1 A1.45 1.45 0 1 0 4.6 6.55" fill="none" stroke="#b4b4b4" stroke-width="0.95"/></svg>
<div class="a" style="left:64.2px;top:424.0px;width:8.4px;height:8.6px;background:#6f83ee;"></div>
<span class="t" style="left:80px;top:423.9px;font-size:9.6px;color:#c8c8c8;">1</span>
<svg class="a" style="left:100.4px;top:423.6px;" width="10" height="10" viewBox="0 0 10 10"><polygon points="4.40,0.80 5.46,3.54 8.39,3.70 6.11,5.56 6.87,8.40 4.40,6.80 1.93,8.40 2.69,5.56 0.41,3.70 3.34,3.54" fill="#d0d0d0"/></svg>
<span class="t" style="left:115.2px;top:424.2px;font-size:9px;color:#c8c8c8;font-weight:bold;letter-spacing:0.2px;">Shape Layer 1</span>
<svg class="a" style="left:0;top:422.6px;" width="514" height="12.3" viewBox="0 422.6 514 12.3">
<path d="M5.6 428.8 q3.8 -4.6 7.6 0 q-3.8 4.6 -7.6 0z" fill="#e0e0e0"/><circle cx="9.4" cy="428.8" r="1.5" fill="#1c1c1c"/>
<path d="M55.2 425.9 v5.6 l4.8 -2.8z" fill="#d8d8d8"/>
<path d="M197.8 429.1 q0 -4 3.2 -4 q3.2 0 3.2 4 h-2 v2.6 h-0.9 v-2.6 h-0.7 v2.6 h-0.9 v-2.6z" fill="#c8c8c8"/>
<path d="M212.8 425.6 l0.9 2.3 l2.3 0.9 l-2.3 0.9 l-0.9 2.3 l-0.9 -2.3 l-2.3 -0.9 l2.3 -0.9z" fill="#6a6a6a"/>
<path d="M219.6 432.1 l7.4 -7" stroke="#d0d0d0" stroke-width="1.1"/>
<g fill="none" stroke="#a8a8a8" stroke-width="1"><path d="M338.2 427.8 l2.3 2.3 l2.3 -2.3 M489.4 427.8 l2.3 2.3 l2.3 -2.3"/></g>
</svg>
<div class="a" style="left:3px;top:434.9px;width:510px;height:11.4px;background:#2d2d2d;"></div>
<div class="a" style="left:25.6px;top:435.5px;width:10.4px;height:10.2px;background:#212121;"></div>
<div class="a" style="left:37.6px;top:435.5px;width:10.4px;height:10.2px;background:#212121;"></div>
<div class="a" style="left:252px;top:435.5px;width:9.4px;height:10.2px;background:#262626;"></div>
<div class="a" style="left:263px;top:435.5px;width:9.4px;height:10.2px;background:#262626;"></div>
<div class="a" style="left:274px;top:435.5px;width:9.4px;height:10.2px;background:#262626;"></div>
<div class="a" style="left:296.6px;top:435.3px;width:49.4px;height:10.6px;background:#1c1c1c;"></div>
<div class="a" style="left:350.4px;top:435.3px;width:10.6px;height:10.6px;background:#212121;"></div>
<div class="a" style="left:364.6px;top:435.3px;width:46.8px;height:10.6px;background:#1c1c1c;"></div>
<span class="t" style="left:369.8px;top:436.6px;font-size:8.4px;color:#d0d0d0;">None</span>
<div class="a" style="left:433.6px;top:435.3px;width:64.6px;height:10.6px;background:#1c1c1c;"></div>
<span class="t" style="left:301.8px;top:436.6px;font-size:8.4px;color:#d0d0d0;">Normal</span>
<span class="t" style="left:437.8px;top:436.6px;font-size:8.4px;color:#d0d0d0;">None</span>
<svg class="a" style="left:418.8px;top:435.6px;" width="10" height="10" viewBox="0 0 10 10"><path d="M7.6 6.9 A3.5 3.5 0 1 1 8.1 4.9 C8.1 6.8 6 6.9 6 5.1 A1.45 1.45 0 1 0 4.6 6.55" fill="none" stroke="#b4b4b4" stroke-width="0.95"/></svg>
<div class="a" style="left:64.2px;top:436.3px;width:8.4px;height:8.6px;background:#d13c3c;"></div>
<span class="t" style="left:80px;top:436.1px;font-size:9.6px;color:#c8c8c8;">2</span>
<span class="t" style="left:102px;top:436.0px;font-size:9.6px;color:#d0d0d0;">T</span>
<span class="t" style="left:115.2px;top:436.5px;font-size:9px;color:#c8c8c8;font-weight:bold;letter-spacing:0.2px;">World</span>
<svg class="a" style="left:0;top:434.9px;" width="514" height="12.3" viewBox="0 434.9 514 12.3">
<path d="M5.6 441.0 q3.8 -4.6 7.6 0 q-3.8 4.6 -7.6 0z" fill="#e0e0e0"/><circle cx="9.4" cy="441.0" r="1.5" fill="#1c1c1c"/>
<path d="M55.2 438.2 v5.6 l4.8 -2.8z" fill="#d8d8d8"/>
<path d="M197.8 441.4 q0 -4 3.2 -4 q3.2 0 3.2 4 h-2 v2.6 h-0.9 v-2.6 h-0.7 v2.6 h-0.9 v-2.6z" fill="#c8c8c8"/>
<path d="M212.8 437.8 l0.9 2.3 l2.3 0.9 l-2.3 0.9 l-0.9 2.3 l-0.9 -2.3 l-2.3 -0.9 l2.3 -0.9z" fill="#6a6a6a"/>
<path d="M219.6 444.4 l7.4 -7" stroke="#d0d0d0" stroke-width="1.1"/>
<g fill="none" stroke="#a8a8a8" stroke-width="1"><path d="M338.2 440.0 l2.3 2.3 l2.3 -2.3 M489.4 440.0 l2.3 2.3 l2.3 -2.3"/><path d="M403.8 440.0 l2.3 2.3 l2.3 -2.3"/></g>
</svg>
<div class="a" style="left:3px;top:447.2px;width:510px;height:11.4px;background:#464646;"></div>
<div class="a" style="left:25.6px;top:447.8px;width:10.4px;height:10.2px;background:#3a3a3a;"></div>
<div class="a" style="left:37.6px;top:447.8px;width:10.4px;height:10.2px;background:#3a3a3a;"></div>
<div class="a" style="left:252px;top:447.8px;width:9.4px;height:10.2px;background:#3e3e3e;"></div>
<div class="a" style="left:263px;top:447.8px;width:9.4px;height:10.2px;background:#3e3e3e;"></div>
<div class="a" style="left:274px;top:447.8px;width:9.4px;height:10.2px;background:#3e3e3e;"></div>
<div class="a" style="left:296.6px;top:447.6px;width:49.4px;height:10.6px;background:#1c1c1c;"></div>
<div class="a" style="left:350.4px;top:447.6px;width:10.6px;height:10.6px;background:#3a3a3a;"></div>
<div class="a" style="left:364.6px;top:447.6px;width:46.8px;height:10.6px;background:#1c1c1c;"></div>
<span class="t" style="left:369.8px;top:448.9px;font-size:8.4px;color:#d0d0d0;">None</span>
<div class="a" style="left:433.6px;top:447.6px;width:64.6px;height:10.6px;background:#1c1c1c;"></div>
<div class="a" style="left:414.6px;top:447.2px;width:17.4px;height:11.4px;background:#555;"></div>
<span class="t" style="left:301.8px;top:448.9px;font-size:8.4px;color:#d0d0d0;">Normal</span>
<span class="t" style="left:437.8px;top:448.9px;font-size:8.4px;color:#d0d0d0;">None</span>
<svg class="a" style="left:418.8px;top:447.9px;" width="10" height="10" viewBox="0 0 10 10"><path d="M7.6 6.9 A3.5 3.5 0 1 1 8.1 4.9 C8.1 6.8 6 6.9 6 5.1 A1.45 1.45 0 1 0 4.6 6.55" fill="none" stroke="#b4b4b4" stroke-width="0.95"/></svg>
<div class="a" style="left:64.2px;top:448.6px;width:8.4px;height:8.6px;background:#d13c3c;"></div>
<span class="t" style="left:80px;top:448.4px;font-size:9.6px;color:#c8c8c8;">3</span>
<span class="t" style="left:102px;top:448.3px;font-size:9.6px;color:#d0d0d0;">T</span>
<div class="a" style="left:112.2px;top:448.1px;width:80.6px;height:9.7px;background:#a8a8a8;"></div>
<span class="t" style="left:115.2px;top:448.8px;font-size:9px;color:#111;font-weight:bold;letter-spacing:0.3px;">Hello</span>
<svg class="a" style="left:0;top:447.2px;" width="514" height="12.3" viewBox="0 447.2 514 12.3">
<path d="M5.6 453.3 q3.8 -4.6 7.6 0 q-3.8 4.6 -7.6 0z" fill="#e0e0e0"/><circle cx="9.4" cy="453.3" r="1.5" fill="#1c1c1c"/>
<path d="M55.4 451.1 h5 l-2.5 4.6z" fill="#d8d8d8"/>
<path d="M197.8 453.7 q0 -4 3.2 -4 q3.2 0 3.2 4 h-2 v2.6 h-0.9 v-2.6 h-0.7 v2.6 h-0.9 v-2.6z" fill="#c8c8c8"/>
<path d="M212.8 450.1 l0.9 2.3 l2.3 0.9 l-2.3 0.9 l-0.9 2.3 l-0.9 -2.3 l-2.3 -0.9 l2.3 -0.9z" fill="#6a6a6a"/>
<path d="M219.6 456.7 l7.4 -7" stroke="#d0d0d0" stroke-width="1.1"/>
<g fill="none" stroke="#a8a8a8" stroke-width="1"><path d="M338.2 452.3 l2.3 2.3 l2.3 -2.3 M489.4 452.3 l2.3 2.3 l2.3 -2.3"/><path d="M403.8 452.3 l2.3 2.3 l2.3 -2.3"/></g>
</svg>

<div class="a" style="left:3px;top:459.5px;width:510px;height:16.5px;background:#1e1e1e;"></div>
<svg class="a" style="left:0;top:459.5px;" width="514" height="12.3" viewBox="0 459.5 514 12.3">
<circle cx="94.2" cy="466.4" r="3.4" fill="none" stroke="#b8b8b8" stroke-width="1.1"/><path d="M92.8 461.4 h2.8" stroke="#b8b8b8" stroke-width="1.2"/>
<g fill="none" stroke="#b8b8b8" stroke-width="1.1"><rect x="197.4" y="464.0" width="4.4" height="3.2" rx="1.6"/><rect x="200.8" y="464.0" width="4.4" height="3.2" rx="1.6"/></g>
</svg>
<span class="t" style="left:104.6px;top:461.2px;font-size:8.6px;color:#b8b8b8;">Scale</span>
<span class="t blue" style="left:210.4px;top:461.0px;font-size:9px;">100.0,100.0<span style="color:#b8b8b8;">%</span></span>
<svg class="a" style="left:428.6px;top:460.2px;" width="10" height="10" viewBox="0 0 10 10"><path d="M7.6 6.9 A3.5 3.5 0 1 1 8.1 4.9 C8.1 6.8 6 6.9 6 5.1 A1.45 1.45 0 1 0 4.6 6.55" fill="none" stroke="#b4b4b4" stroke-width="0.95"/></svg>

<div class="a" style="left:513px;top:362px;width:1.4px;height:114px;background:#1a1a1a;"></div>
<svg class="a" style="left:500px;top:380px;" width="500" height="96" viewBox="500 380 500 96">
<rect x="517.600" y="459.6" width="464.800" height="16.4" fill="#2c2c2c"/>
<rect x="516" y="386.4" width="467" height="5.4" fill="#767676"/>
<rect x="513.800" y="385.8" width="4.600" height="6.6" rx="2.200" fill="#2d8ceb"/><rect x="981.600" y="385.8" width="4" height="6.6" rx="2" fill="#2d8ceb"/>
<rect x="517" y="407.8" width="465.400" height="11" fill="#767676"/>
<rect x="513.800" y="407.8" width="3.800" height="11" rx="1.600" fill="#2d8ceb"/><rect x="981.600" y="407.8" width="3.800" height="11" rx="1.600" fill="#2d8ceb"/>
<path d="M517.600 418.8 H981.400 V422.2 L900 422.2 L896 423.4 L754 423.4 L750 422.2 L517.600 422.2 Z" fill="#20c02c"/>
<path d="M517.600 422.6 L750 422.6 L754 423.800 L896 423.800 L900 422.6 L981.400 422.6 V434.4 L952 434.6 L949 436.2 L897 436.2 L894 435.2 L738 435.2 L734 434 L517.600 434 Z" fill="#56659f"/>
<path d="M517.600 434.800 L734 434.800 L738 436 L894 436 L897 437 L949 437 L952 435.4 L981.400 435.2 V446.4 L960 446.6 L957 448.800 L892 448.800 L889 447.800 L731 447.800 L727 446.600 L517.600 446.400 Z" fill="#863c3c"/>
<path d="M517.600 447.200 L727 447.400 L731 448.600 L889 448.600 L892 449.600 L957 449.600 L960 447.400 L981.400 447.200 V457.800 L962 458 L959 460.600 L731 460.600 L727 459 L517.600 458.800 Z" fill="#bd5357"/>
<rect x="981.4" y="422.6" width="4" height="38.4" fill="#4c4c4c"/>
<!-- ticks -->
<g stroke="#8a8a8a" stroke-width="0.8"><path d="M579.500 403.600 v3 M640.500 403.600 v3 M701.500 403.600 v3 M762.500 403.600 v3 M823.500 403.600 v3 M884.500 403.600 v3 M945.500 403.600 v3"/></g>
<!-- playhead -->
<path d="M518.2 400 V476" stroke="#2d8ceb" stroke-width="1"/>
<path d="M514 397.400 q0 -1.400 1.400 -1.400 h5.800 q1.400 0 1.400 1.400 v4 l-4.300 5.400 l-4.300 -5.400z" fill="#3a94ee"/>
<!-- I cursor -->
<path d="M516.6 461.600 h3.400 M516.6 471 h3.400 M518.3 461.600 v9.400" stroke="#d8d8d8" stroke-width="0.9" fill="none"/>
<!-- right icons -->
<path d="M988 410 h8.400 v5 l-4.200 3.600 l-4.200 -3.600z" fill="#c4c4c4"/>
<path d="M988.400 432.600 q-0.400 -5 4 -5.600 v-1.800 l3.400 2.800 l-3.400 2.800 v-1.600 q-2 0.200 -2 3.400z" fill="#c4c4c4"/><rect x="990.400" y="431" width="6" height="2.200" fill="#c4c4c4"/>
</svg>
<span class="t" style="left:518.1px;top:394.6px;font-size:7.8px;color:#b0b0b0;">00s</span>
<span class="t" style="left:573.1px;top:394.6px;font-size:7.8px;color:#b0b0b0;">02s</span>
<span class="t" style="left:634.1px;top:394.6px;font-size:7.8px;color:#b0b0b0;">04s</span>
<span class="t" style="left:695.1px;top:394.6px;font-size:7.8px;color:#b0b0b0;">06s</span>
<span class="t" style="left:756.1px;top:394.6px;font-size:7.8px;color:#b0b0b0;">08s</span>
<span class="t" style="left:817.1px;top:394.6px;font-size:7.8px;color:#b0b0b0;">10s</span>
<span class="t" style="left:878.1px;top:394.6px;font-size:7.8px;color:#b0b0b0;">12s</span>
<span class="t" style="left:939.1px;top:394.6px;font-size:7.8px;color:#b0b0b0;">14s</span>
<div class="a" style="left:997.6px;top:360.4px;width:1.4px;height:116px;background:#2b4166;"></div>
<div class="a" style="left:498px;top:422.6px;width:1px;height:36.6px;background:#1c1c1c;"></div>
<!-- annotation arrow -->
<svg class="a" style="left:100px;top:300px;" width="160" height="176" viewBox="100 300 160 176"><path d="M242.4 308 L138 437.6" stroke="#e8181c" stroke-width="2.6" fill="none"/><path d="M118.8 461.5 L138.4 428.6 L140.6 434.4 L146.8 435.2 Z" fill="#e8181c"/></svg>

</div>
</body>
</html>
